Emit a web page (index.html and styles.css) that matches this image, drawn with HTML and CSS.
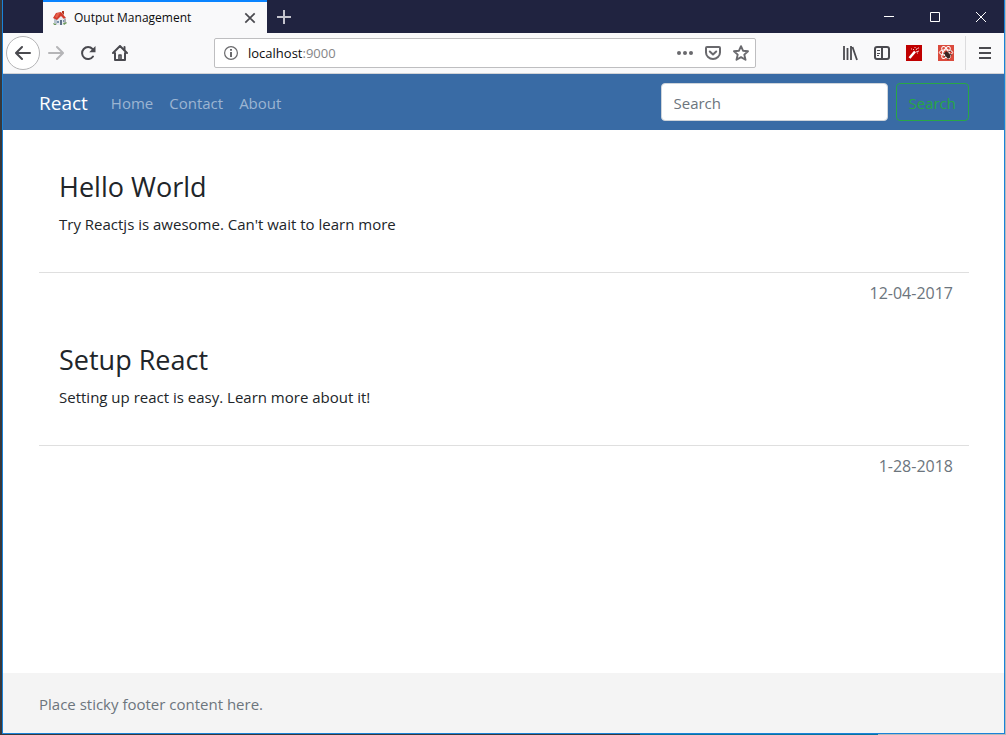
FILE: index.html
```html
<!DOCTYPE html>
<html lang="en">
<head>
<meta charset="utf-8">
<title>Output Management</title>
<link rel="stylesheet" href="styles.css">
</head>
<body>
<div class="window">
  <div class="titlebar">
    <div class="tab">
      <svg class="favicon" width="16" height="16" viewBox="0 0 16 16">
        <path d="M2 8l3 1v6l-3-2z" fill="#b9c4cd"/>
        <path d="M5 9l4-3 4 3v6H5z" fill="#e8ebef"/>
        <path d="M1 8l3-5 5-1 5 6-2 1-3-3-4 4z" fill="#d23a2c"/>
        <path d="M3 7l2-4 3 0-3 5z" fill="#e5604c"/>
        <path d="M10 1h2v4l-2-2z" fill="#b2361f"/>
        <path d="M8 10h2v5H8z" fill="#5d6f87"/>
        <path d="M5 11h2v2H5zM11 10h1v2h-1z" fill="#7790ad"/>
        <path d="M1 13l3 1v1H2zM11 13l3-1 1 1-3 2z" fill="#6b9a59"/>
        <path d="M12 8l2 1v3l-2 1z" fill="#a9adb3"/>
      </svg>
      <span class="tab-title">Output Management</span>
      <button class="icon-button" aria-label="Close tab"><svg width="12" height="12" viewBox="0 0 12 12" fill="none" stroke="#4a4a4f" stroke-width="1.7"><path d="M1.3 1.3l9.4 9.4M10.700 1.3l-9.4 9.4"/></svg></button>
    </div>
    <button class="icon-button new-tab" aria-label="New tab"><svg width="14" height="14" viewBox="0 0 14 14" stroke="#c3c3cd" stroke-width="2"><path d="M7 0v14M0 7h14"/></svg></button>
    <div class="window-controls">
      <button class="icon-button" aria-label="Minimize"><svg width="10" height="10" viewBox="0 0 10 10" stroke="#fff"><path d="M0 4.500h10"/></svg></button>
      <button class="icon-button" aria-label="Maximize"><svg width="10" height="10" viewBox="0 0 10 10" fill="none" stroke="#fff"><path d="M.5.5h9v9h-9z"/></svg></button>
      <button class="icon-button" aria-label="Close"><svg width="10" height="10" viewBox="0 0 10 10" stroke="#fff"><path d="M0 0l10 10M10 0L0 10"/></svg></button>
    </div>
  </div>

  <div class="toolbar">
    <div class="history">
      <button class="icon-button back" aria-label="Back"><svg width="16" height="16" viewBox="0 0 16 16" fill="none" stroke="#4a4a4f" stroke-width="2" stroke-linecap="round" stroke-linejoin="round"><path d="M15 8H1.500M7 2L1 8l6 6"/></svg></button>
      <button class="icon-button" aria-label="Forward"><svg width="16" height="16" viewBox="0 0 16 16" fill="none" stroke="#b5b5b7" stroke-width="2" stroke-linecap="round" stroke-linejoin="round"><path d="M1 8h13.500M9 2l6 6-6 6"/></svg></button>
      <button class="icon-button" aria-label="Reload"><svg width="16" height="16" viewBox="0 0 16 16"><path d="M13 11.500A6 6 0 1 1 12.500 4" fill="none" stroke="#4a4a4f" stroke-width="2" stroke-linecap="round"/><path d="M15.500 1v6.200H9.200z" fill="#4a4a4f"/></svg></button>
      <button class="icon-button" aria-label="Home"><svg width="16" height="16" viewBox="0 0 16 16" fill="none" stroke="#4a4a4f" stroke-width="2" stroke-linecap="round" stroke-linejoin="round"><path d="M1 8l7-7 7 7M3 8v7h10V8"/><path d="M7 14v-4h2v4" stroke-width="1.600"/><path d="M12.500 2v3"/></svg></button>
    </div>
    <div class="address">
      <svg width="14" height="14" viewBox="0 0 14 14"><circle cx="7" cy="7" r="6.400" fill="none" stroke="#6a6a6d" stroke-width="1.200"/><path d="M6 3h2v1.700H6zM6 6h2v5H6z" fill="#6a6a6d"/></svg>
      <div class="url">localhost<span class="port">:9000</span></div>
      <button class="icon-button" aria-label="Page actions"><svg width="16" height="16" viewBox="0 0 16 16" fill="#69696d"><circle cx="2" cy="8" r="2"/><circle cx="8" cy="8" r="2"/><circle cx="14" cy="8" r="2"/></svg></button>
      <button class="icon-button" aria-label="Save to Pocket"><svg width="16" height="16" viewBox="0 0 16 16" fill="none" stroke="#69696d" stroke-width="2" stroke-linecap="round" stroke-linejoin="round"><path d="M2 2h12q1 0 1 1v4.500a7 6.500 0 0 1-14 0V3q0-1 1-1z"/><path d="M4.800 6.500L8 9.500l3.200-3"/></svg></button>
      <button class="icon-button" aria-label="Bookmark"><svg width="16" height="16" viewBox="0 0 16 16" fill="none" stroke="#69696d" stroke-width="1.900" stroke-linejoin="round"><path d="M8 1.200l2 4.500 5 .5-3.700 3.400 1.200 5.200L8 12.100l-4.500 2.700 1.200-5.200L1 6.200l5-.5z"/></svg></button>
    </div>
    <div class="extensions">
      <button class="icon-button" aria-label="Library"><svg width="16" height="16" viewBox="0 0 16 16" stroke="#4a4a4f" stroke-width="2"><path d="M2 1v14M5.500 3v12M9 1v14M10.500 2l4.500 13" fill="none" stroke-width="1.800"/></svg></button>
      <button class="icon-button" aria-label="Sidebars"><svg width="16" height="16" viewBox="0 0 16 16" fill="none" stroke="#4a4a4f" stroke-width="2"><rect x="1" y="2" width="14" height="12" rx="2"/><path d="M8 2v12"/><path d="M3 5.500h3M3 8.500h3M3 10.500h2" stroke-width="1"/></svg></button>
      <button class="icon-button" aria-label="Magic wand"><svg width="16" height="16" viewBox="0 0 16 16"><path fill="#c00000" d="M0 0h16v16H0z"/><path d="M3.500 13L9 6.500" stroke="#fff" stroke-width="2.500"/><path d="M10 5l1.500-2M10 7l3-1M7 4l1 1M12 3h1M5 4h1M9 2v1M11 8h1" stroke="#fff" stroke-width=".8"/></svg></button>
      <button class="icon-button" aria-label="React tools"><svg width="16" height="16" viewBox="0 0 16 16"><path fill="#db4a3c" d="M0 0h16v16H0z"/><g fill="none" stroke="#fff"><ellipse cx="8" cy="7.500" rx="6.700" ry="2.700"/><ellipse cx="8" cy="7.500" rx="6.700" ry="2.700" transform="rotate(60 8 7.500)"/><ellipse cx="8" cy="7.500" rx="6.700" ry="2.700" transform="rotate(120 8 7.500)"/></g><ellipse cx="9.500" cy="10" rx="2.200" ry="3.600" transform="rotate(-35 9.500 10)" fill="#392522"/><path d="M5 8l3 1M6 12l3-2M8 6l1 3M10 7l3-1M11 9l3 1M10 12v3" stroke="#392522" stroke-width=".8"/></svg></button>
      <span class="divider"></span>
      <button class="icon-button" aria-label="Open menu"><svg width="12" height="12" viewBox="0 0 12 12" stroke="#4a4a4f" stroke-width="2"><path d="M0 1h12M0 6h12M0 11h12"/></svg></button>
    </div>
  </div>

  <header class="navbar">
    <a class="brand" href="#">React</a>
    <nav class="nav-links">
      <a href="#">Home</a>
      <a href="#">Contact</a>
      <a href="#">About</a>
    </nav>
    <form class="search">
      <input class="search-input" type="search" placeholder="Search" aria-label="Search">
      <button class="search-button" type="button">Search</button>
    </form>
  </header>

  <main class="posts">
    <article class="post">
      <div class="post-body">
        <h3>Hello World</h3>
        <p>Try Reactjs is awesome. Can't wait to learn more</p>
      </div>
      <div class="post-date">12-04-2017</div>
    </article>
    <article class="post">
      <div class="post-body">
        <h3>Setup React</h3>
        <p>Setting up react is easy. Learn more about it!</p>
      </div>
      <div class="post-date">1-28-2018</div>
    </article>
  </main>

  <footer class="footer">Place sticky footer content here.</footer>
</div>
</body>
</html>
```

FILE: styles.css
```css
* {
  box-sizing: border-box;
}

body {
  margin: 0;
  min-height: 100vh;
  display: flex;
  padding: 0 1px 1px 2px;
  background: linear-gradient(90deg, #37383c 640px, #08749f 640px 878px, #b9b9b9 878px);
  color: #212529;
  font: 15px/24px "Open Sans", "Noto Sans", sans-serif;
}

button,
input {
  font: inherit;
}

a {
  color: inherit;
  text-decoration: none;
}

svg {
  display: block;
}

.window {
  flex: 1;
  display: flex;
  flex-direction: column;
  border: 1px solid #1a82d8;
  border-top: 0;
  background: #fff;
}

.icon-button {
  display: flex;
  align-items: center;
  justify-content: center;
  padding: 0;
  border: 0;
  background: none;
}

.titlebar {
  display: flex;
  height: 33px;
  padding-left: 40px;
  background: #202340;
}

.tab {
  display: flex;
  align-items: center;
  width: 224px;
  padding: 0 11px 0 9px;
  border-top: 2px solid #0a84ff;
  background: #f9f9fa;
  color: #0c0c0d;
  font-size: 12px;
}

.tab-title {
  flex: 1;
  padding-left: 6px;
}

.new-tab {
  width: 34px;
}

.window-controls {
  display: flex;
  margin-left: auto;
}

.window-controls .icon-button {
  width: 46px;
}

.toolbar {
  display: flex;
  align-items: center;
  height: 41px;
  padding: 0 13px 0 3px;
  border-bottom: 1px solid #d3d3d6;
  background: #f9f9fa;
}

.history {
  display: flex;
  align-items: center;
  gap: 16px;
}

.back {
  width: 34px;
  height: 34px;
  margin-right: -8px;
  border: 1px solid #b4b4b6;
  border-radius: 50%;
  background: #fff;
}

.address {
  display: flex;
  flex: 1;
  align-items: center;
  gap: 12px;
  height: 30px;
  margin: 0 86px;
  padding: 0 6px 0 9px;
  border: 1px solid #bebec0;
  border-radius: 2px;
  background: #fff;
  color: #0c0c0d;
  font-size: 13px;
}

.url {
  flex: 1;
  margin-left: -2px;
}

.port {
  color: #858587;
}

.extensions {
  display: flex;
  align-items: center;
  gap: 16px;
}

.divider {
  width: 1px;
  height: 34px;
  margin: 0 -3px 0 -5px;
  background: #dcdcde;
}

.navbar {
  display: flex;
  align-items: center;
  height: 56px;
  padding: 0 35px 0 36px;
  background: #396ba5;
}

.brand {
  padding-top: 2px;
  color: #fff;
  font-size: 19px;
}

.nav-links {
  display: flex;
  gap: 16px;
  margin-left: 23px;
  padding-top: 2px;
  color: #9cb5d2;
}

.search {
  display: flex;
  gap: 8px;
  margin-left: auto;
}

.search-input {
  width: 227px;
  height: 38px;
  padding: 7px 12px 5px;
  border: 1px solid #ced4da;
  border-radius: 4px;
  background: #fff;
}

.search-input::placeholder {
  color: #6c757d;
  opacity: 1;
}

.search-button {
  height: 38px;
  padding: 2px 12px 0;
  border: 1px solid #28a745;
  border-radius: 4px;
  background: none;
  color: #28a745;
}

.posts {
  display: flex;
  flex: 1;
  flex-direction: column;
  gap: 19px;
  padding: 20px 35px 20px 36px;
}

.post-body {
  padding: 20px 20px 36px;
  border-bottom: 1px solid #dfdfdf;
}

.post h3 {
  margin: 0 0 8px;
  font-size: 27px;
  font-weight: 400;
  line-height: 34px;
}

.post p {
  margin: 0;
}

.post-date {
  padding: 8px 16px 0;
  color: #6c757d;
  font-size: 16px;
  text-align: right;
}

.post + .post {
  margin-top: -1px;
}

.footer {
  padding: 19px 36px 17px;
  background: #f4f4f4;
  color: #6c757d;
}
```
